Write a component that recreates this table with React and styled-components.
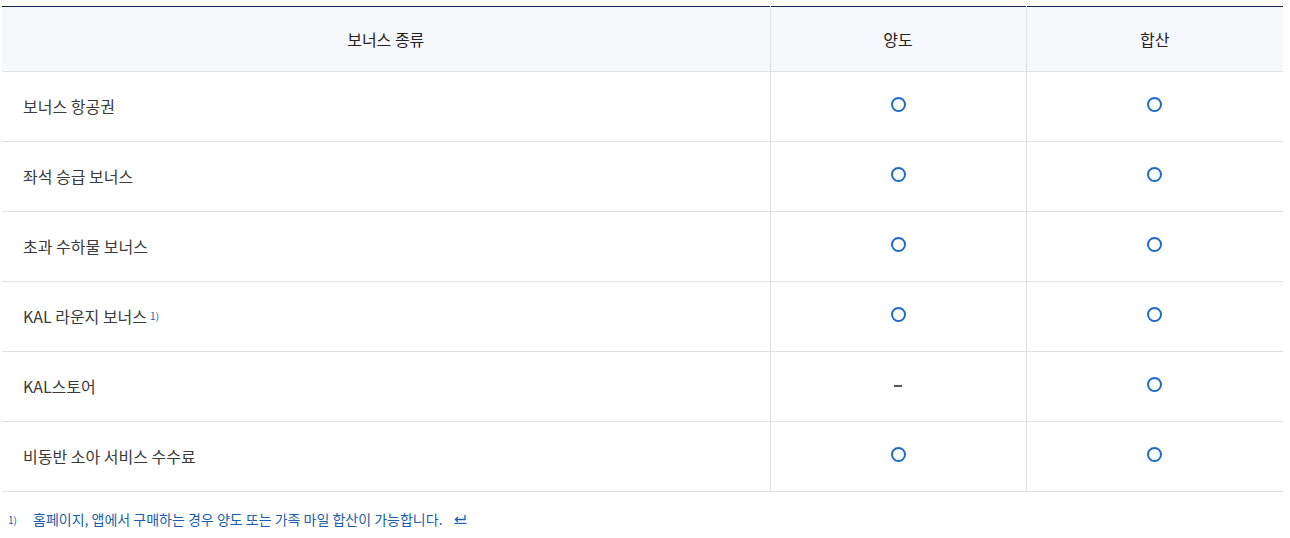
import React from "react";
import styled, { createGlobalStyle } from "styled-components";

const Global = createGlobalStyle`
  html, body { margin: 0; padding: 0; background: #fff; }
  body { font-family: "Noto Sans CJK KR", "Noto Sans", sans-serif; }
`;

const Page = styled.div`
  padding: 6px 7px 0 2px;
`;

const Table = styled.table`
  width: 1281px;
  border-collapse: collapse;
  table-layout: fixed;
  border-top: 1px solid #14254a;
`;

const Th = styled.th`
  height: 64px;
  background: #f6f8fb;
  font-weight: 400;
  font-size: 16px;
  color: #222;
  text-align: center;
  border-bottom: 1px solid #e1e1e1;
  border-left: ${(p) => (p.$first ? "none" : "1px solid #e1e1e1")};
  padding: 0;
`;

const Td = styled.td`
  height: 69px;
  padding: 0 ${(p) => (p.$center ? "0" : "21px")};
  font-size: 16px;
  color: #3a3a3a;
  text-align: ${(p) => (p.$center ? "center" : "left")};
  border-bottom: 1px solid #e1e1e1;
  border-left: ${(p) => (p.$first ? "none" : "1px solid #e1e1e1")};
  vertical-align: middle;
`;

const Label = styled.span`
  position: relative;
  top: -1px;
`;

const Sup = styled.sup`
  font-size: 10px;
  color: #1a5eab;
  margin-left: 3px;
  vertical-align: 3px;
`;

const Circle = styled.span`
  display: inline-block;
  width: 11px;
  height: 11px;
  border: 2.3px solid #1a6ccc;
  border-radius: 50%;
  position: relative;
  top: -2px;
`;

const Dash = styled.span`
  display: inline-block;
  width: 8px;
  height: 2px;
  background: #555;
  position: relative;
  top: -7px;
`;

const Note = styled.div`
  display: flex;
  align-items: center;
  padding: 17px 0 0 6px;
  color: #1a5eab;
  font-size: 14px;
`;

const NoteNum = styled.span`
  font-size: 10px;
  width: 25px;
`;

const Back = styled.span`
  margin-left: 11px;
  display: inline-flex;
`;

const rows = [
  { name: "보너스 항공권", a: true, b: true },
  { name: "좌석 승급 보너스", a: true, b: true },
  { name: "초과 수하물 보너스", a: true, b: true },
  { name: "KAL 라운지 보너스", sup: "1)", a: true, b: true },
  { name: "KAL스토어", a: false, b: true },
  { name: "비동반 소아 서비스 수수료", a: true, b: true },
];

const Mark = ({ on }) => (on ? <Circle /> : <Dash />);

export default function App() {
  return (
    <Page>
      <Global />
      <Table>
        <colgroup>
          <col style={{ width: 768 }} />
          <col style={{ width: 256 }} />
          <col style={{ width: 257 }} />
        </colgroup>
        <thead>
          <tr>
            <Th $first>보너스 종류</Th>
            <Th>양도</Th>
            <Th>합산</Th>
          </tr>
        </thead>
        <tbody>
          {rows.map((r) => (
            <tr key={r.name}>
              <Td $first>
                <Label>
                  {r.name}
                  {r.sup && <Sup>{r.sup}</Sup>}
                </Label>
              </Td>
              <Td $center>
                <Mark on={r.a} />
              </Td>
              <Td $center>
                <Mark on={r.b} />
              </Td>
            </tr>
          ))}
        </tbody>
      </Table>
      <Note>
        <NoteNum>1)</NoteNum>
        <span>홈페이지, 앱에서 구매하는 경우 양도 또는 가족 마일 합산이 가능합니다.</span>
        <Back>
          <svg width="13" height="10" viewBox="0 0 13 10" fill="none" stroke="#1a5eab" strokeWidth="1.3">
            <path d="M11 1v4.5H1.5" />
            <path d="M4 3L1.5 5.5 4 8" />
            <path d="M0.5 9.5h12" />
          </svg>
        </Back>
      </Note>
    </Page>
  );
}
